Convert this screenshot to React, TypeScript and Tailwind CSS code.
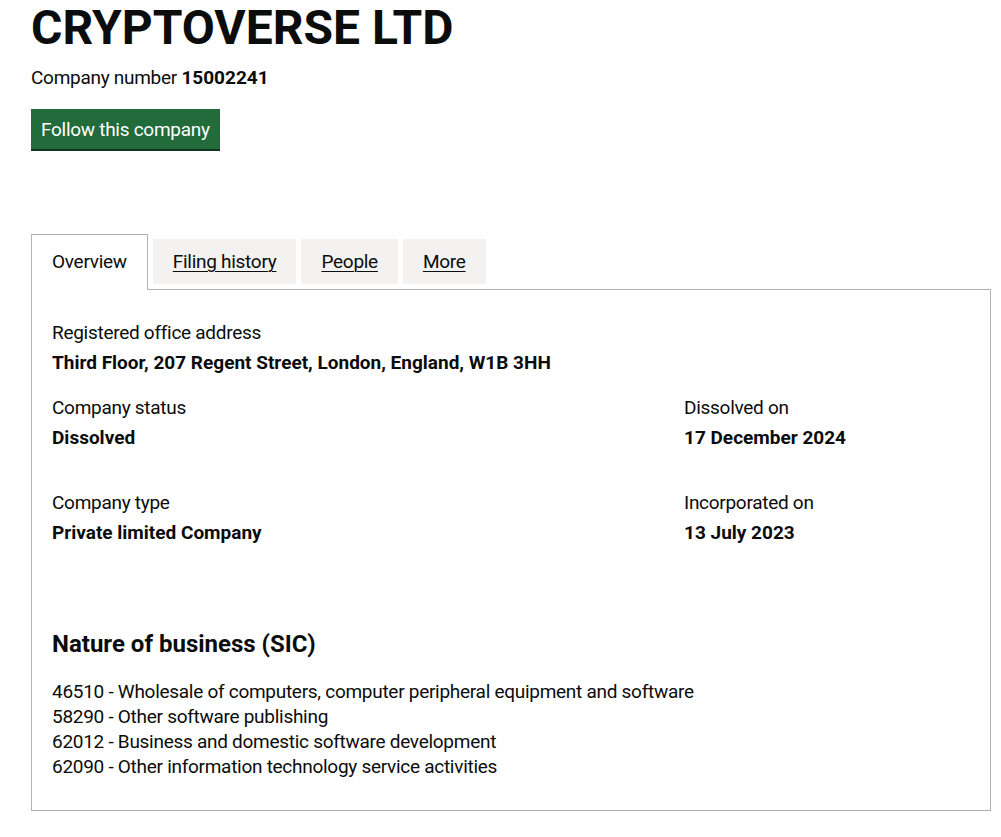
import React from "react";

const tabs = [
  { label: "Overview", active: true },
  { label: "Filing history", active: false },
  { label: "People", active: false },
  { label: "More", active: false },
];

const sicCodes = [
  "46510 - Wholesale of computers, computer peripheral equipment and software",
  "58290 - Other software publishing",
  "62012 - Business and domestic software development",
  "62090 - Other information technology service activities",
];

function Field({ label, value }: { label: string; value: string }) {
  return (
    <dl>
      <dt className="mb-[5px]">{label}</dt>
      <dd className="font-bold tracking-normal">{value}</dd>
    </dl>
  );
}

export default function App() {
  return (
    <div className="min-h-screen bg-white pl-[31px] pt-[3px] text-[19px] leading-[25px] tracking-[-0.28px] text-[#0b0c0c] [font-family:Roboto,'Liberation_Sans',sans-serif]">
      {/* heading */}
      <h1 className="mb-[12px] text-[48px] font-bold leading-[50px] tracking-normal">CRYPTOVERSE LTD</h1>
      <p>
        Company number <strong className="font-bold tracking-normal">15002241</strong>
      </p>
      <button className="mt-[19px] bg-[#226b3b] px-[10px] pb-[7px] pt-[8px] text-white shadow-[0_2px_0_#0f3a20]">
        Follow this company
      </button>

      {/* tabs */}
      <div className="mt-[85px] w-[960px]">
        <ul className="flex items-start">
          {tabs.map((tab) =>
            tab.active ? (
              <li
                key={tab.label}
                className="relative z-10 mb-[-1px] mr-[5px] border border-b-0 border-[#b1b4b6] bg-white px-[20px] pb-[16px] pt-[14px]"
              >
                {tab.label}
              </li>
            ) : (
              <li key={tab.label} className="mr-[5px] mt-[5px] bg-[#f3f2f1] px-[20px] py-[10px]">
                <a href="#" className="underline decoration-1 underline-offset-[3px]">
                  {tab.label}
                </a>
              </li>
            )
          )}
        </ul>

        <div className="border border-[#b1b4b6] px-[20px] pb-[31px] pt-[30px]">
          <div className="mb-[20px]">
            <Field label="Registered office address" value="Third Floor, 207 Regent Street, London, England, W1B 3HH" />
          </div>
          <div className="mb-[40px] grid grid-cols-[632px_1fr]">
            <Field label="Company status" value="Dissolved" />
            <Field label="Dissolved on" value="17 December 2024" />
          </div>
          <div className="grid grid-cols-[632px_1fr]">
            <Field label="Company type" value="Private limited Company" />
            <Field label="Incorporated on" value="13 July 2023" />
          </div>

          <h2 className="mb-[20px] mt-[84px] text-[24px] font-bold leading-[30px] tracking-normal">
            Nature of business (SIC)
          </h2>
          <ul>
            {sicCodes.map((code) => (
              <li key={code}>{code}</li>
            ))}
          </ul>
        </div>
      </div>
    </div>
  );
}
